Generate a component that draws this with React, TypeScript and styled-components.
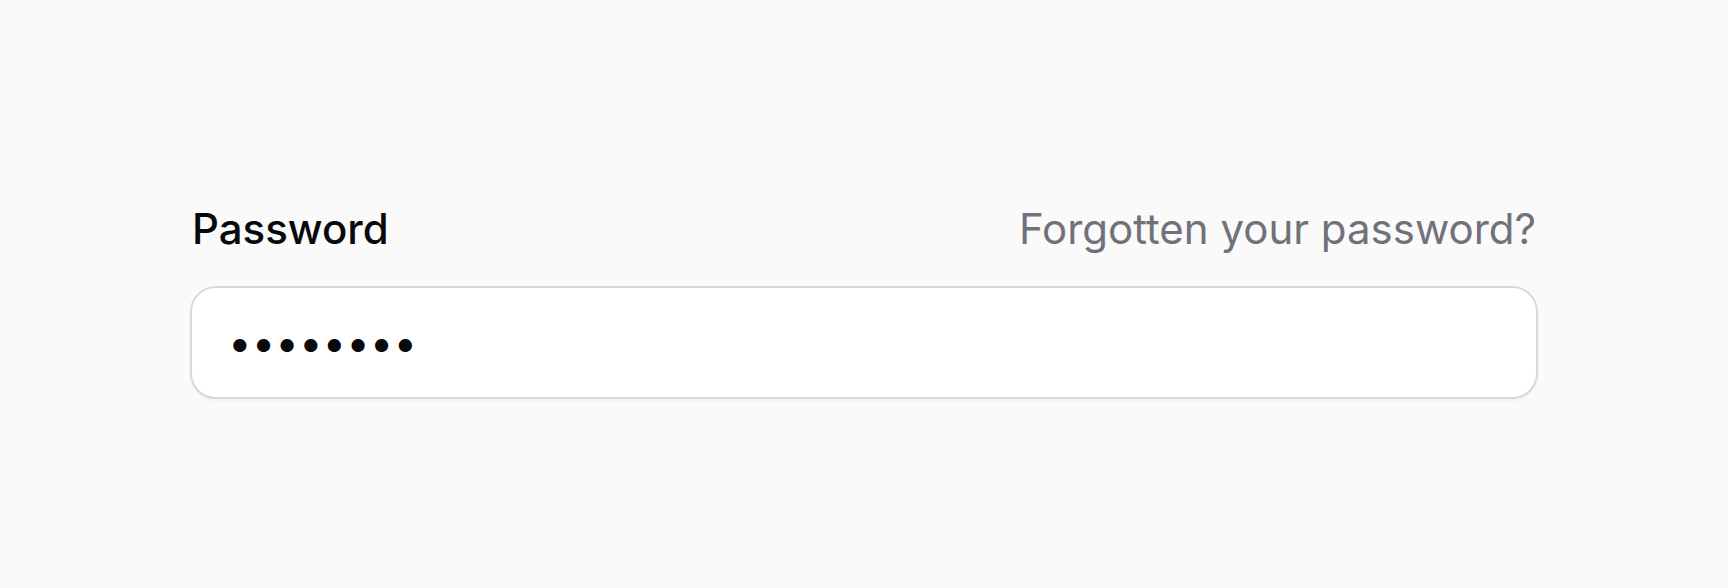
import styled, { createGlobalStyle } from "styled-components";

const GlobalStyle = createGlobalStyle`
  html, body {
    margin: 0;
    padding: 0;
    background-color: #fafafa;
    font-family: Inter, "Noto Sans", sans-serif;
  }
`;

const Page = styled.div`
  min-height: 588px;
  box-sizing: border-box;
  padding-top: 197px;
  display: flex;
  justify-content: center;
`;

const Field = styled.div`
  width: 1348px;
  display: flex;
  flex-direction: column;
  gap: 26px;
`;

const LabelRow = styled.div`
  display: flex;
  align-items: center;
  justify-content: space-between;
  padding-left: 2px;
  padding-right: 2px;
`;

const Label = styled.label`
  font-size: 42px;
  line-height: 1.5;
  font-weight: 500;
  color: #09090b;
`;

const ForgotLink = styled.a`
  font-size: 42px;
  line-height: 1.5;
  color: #71717a;
  text-decoration: none;
  cursor: pointer;
`;

const Input = styled.input`
  box-sizing: border-box;
  width: 100%;
  height: 113px;
  padding: 0 36px;
  border: 2px solid #d9d9db;
  border-radius: 26px;
  background-color: #ffffff;
  box-shadow: 0 2px 3px rgba(0, 0, 0, 0.04);
  font-family: Inter, "Noto Sans", sans-serif;
  font-size: 42px;
  color: #09090b;
  outline: none;
`;

export default function App() {
  return (
    <>
      <GlobalStyle />
      <Page>
        <Field>
          <LabelRow>
            <Label htmlFor="password">Password</Label>
            <ForgotLink>Forgotten your password?</ForgotLink>
          </LabelRow>
          <Input id="password" type="password" defaultValue="password" readOnly />
        </Field>
      </Page>
    </>
  );
}
